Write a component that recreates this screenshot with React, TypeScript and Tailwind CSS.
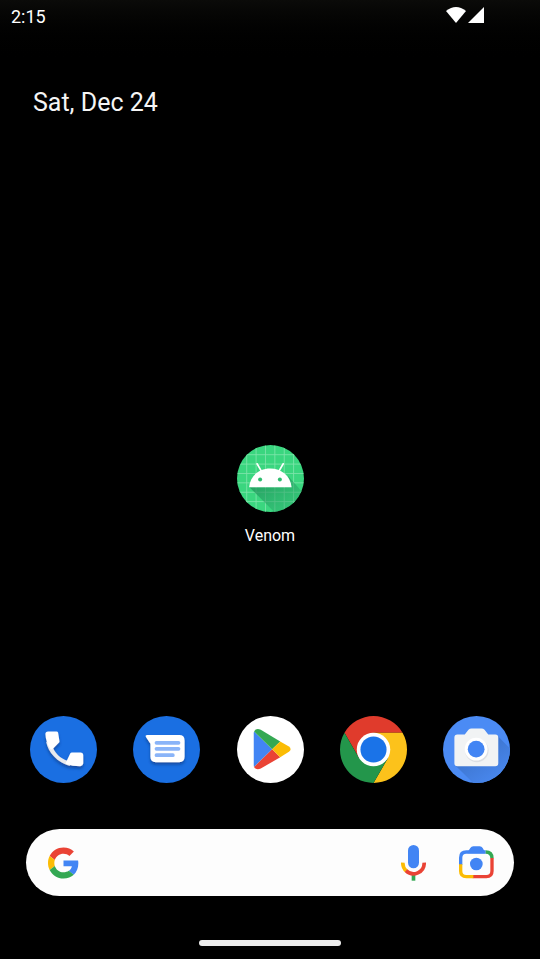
import type { ReactNode } from "react";

function VenomIcon() {
  return (
    <svg viewBox="0 0 200 200" className="size-[67px]" aria-hidden="true">
      <defs>
        <clipPath id="venom-disc">
          <circle cx="100" cy="100" r="100" />
        </clipPath>
        <linearGradient id="venom-shade" x1="0" y1="0" x2="1" y2="1">
          <stop offset="0" stopColor="#1d8a55" stopOpacity="0.85" />
          <stop offset="1" stopColor="#2bab6c" stopOpacity="0.25" />
        </linearGradient>
      </defs>
      <g clipPath="url(#venom-disc)">
        <rect width="200" height="200" fill="#3ad67f" />
        <path
          d="M29 0V200M57 0V200M85 0V200M113 0V200M141 0V200M169 0V200M0 29H200M0 57H200M0 85H200M0 113H200M0 141H200M0 169H200"
          stroke="#7fe5ab"
          strokeWidth="2.5"
        />
        <path d="M37 126L111 200H200V146L152 92L162 126Z" fill="url(#venom-shade)" />
      </g>
      <path d="M60 56L74 80M138 56L124 80" stroke="#fff" strokeWidth="5" strokeLinecap="round" />
      <path d="M36 126C39 92 66 70 99 70S160 92 163 126Z" fill="#fff" />
      <circle cx="69" cy="103" r="6" fill="#2fbd6f" />
      <circle cx="128" cy="103" r="6" fill="#2fbd6f" />
    </svg>
  );
}

function PhoneIcon() {
  return (
    <svg viewBox="0 0 200 200" className="size-[67px]" aria-hidden="true">
      <defs>
        <filter id="phone-shadow" x="-20%" y="-20%" width="150%" height="150%">
          <feDropShadow dx="0" dy="7" stdDeviation="5" floodColor="#0b3c86" floodOpacity="0.7" />
        </filter>
      </defs>
      <circle cx="100" cy="100" r="100" fill="#1a6fe2" />
      <g filter="url(#phone-shadow)">
        <path d="M48 76C54 108 82 140 120 149L114 134C90 128 72 108 66 88Z" fill="#e8eaed" />
        <path
          d="M54 46H79Q83 46 84 50L88 75Q88 78 86 80L67 99Q62 102 60 98Q47 76 46 54Q46 46 54 46Z"
          fill="#fff"
        />
        <path
          d="M125 109L151 109Q158 109 159 116V142Q158 149 150 150Q126 150 108 143Q104 141 108 137L120 112Q122 109 125 109Z"
          fill="#fff"
        />
      </g>
    </svg>
  );
}

function MessagesIcon() {
  return (
    <svg viewBox="0 0 200 200" className="size-[67px]" aria-hidden="true">
      <defs>
        <filter id="messages-shadow" x="-20%" y="-20%" width="150%" height="150%">
          <feDropShadow dx="0" dy="7" stdDeviation="5" floodColor="#0b3c86" floodOpacity="0.7" />
        </filter>
      </defs>
      <circle cx="100" cy="100" r="100" fill="#1a6fe2" />
      <path
        d="M42 57H138Q154 57 154 73V122Q154 138 138 138H68Q52 138 52 122V83L38 62Q36 57 42 57Z"
        fill="#fff"
        filter="url(#messages-shadow)"
      />
      <path d="M70 80H136M70 98H136M70 117H119" stroke="#8ab4f8" strokeWidth="11" strokeLinecap="round" />
    </svg>
  );
}

function PlayIcon() {
  return (
    <svg viewBox="0 0 200 200" className="size-[67px]" aria-hidden="true">
      <circle cx="100" cy="100" r="100" fill="#fff" />
      <path d="M51 46L105 99L51 152Q50 150 50 146V52Q50 48 51 46Z" fill="#4285f4" />
      <path d="M51 46Q57 35 71 41L129 76L105 99Z" fill="#34a853" />
      <path d="M51 152Q57 163 71 157L129 123L105 99Z" fill="#ea4335" />
      <path d="M129 76L155 91Q165 99 155 107L129 123L105 99Z" fill="#fbbc04" />
    </svg>
  );
}

function ChromeIcon() {
  return (
    <svg viewBox="0 0 200 200" className="size-[67px]" aria-hidden="true">
      <path d="M13.4 50A100 100 0 0 1 186.6 50H100L56.7 125Z" fill="#e03b2c" />
      <path d="M186.6 50A100 100 0 0 1 100 200L143.3 125L100 50Z" fill="#fcc21b" />
      <path d="M100 200A100 100 0 0 1 13.4 50L56.7 125H143.3Z" fill="#23964b" />
      <circle cx="100" cy="100" r="50" fill="#fff" />
      <circle cx="100" cy="100" r="39" fill="#1a73e8" />
    </svg>
  );
}

function CameraIcon() {
  return (
    <svg viewBox="0 0 200 200" className="size-[67px]" aria-hidden="true">
      <defs>
        <clipPath id="camera-disc">
          <circle cx="100" cy="100" r="100" />
        </clipPath>
        <linearGradient id="camera-shade" x1="0.3" y1="0.2" x2="0.9" y2="1">
          <stop offset="0" stopColor="#3b72ca" />
          <stop offset="1" stopColor="#4b8bf4" />
        </linearGradient>
      </defs>
      <g clipPath="url(#camera-disc)">
        <rect width="200" height="200" fill="#4b8bf4" />
        <path d="M37 148L90 200H200V97L162 58L150 130Z" fill="url(#camera-shade)" />
      </g>
      <path
        d="M43 55H65L76 41Q80 37 85 37H115Q120 37 124 41L135 55H156Q165 55 165 64V141Q165 150 156 150H43Q34 150 34 141V64Q34 55 43 55Z"
        fill="#f1f3f4"
      />
      <circle cx="101" cy="103" r="35" fill="#dcdfe3" />
      <circle cx="99" cy="99" r="34" fill="#fff" />
      <circle cx="99" cy="99" r="25" fill="#4285f4" />
    </svg>
  );
}

function GoogleLogo() {
  return (
    <svg viewBox="0 0 48 48" className="h-8 w-[31px]" aria-hidden="true">
      <path
        fill="#ea4335"
        d="M24 9.5c3.54 0 6.71 1.22 9.21 3.6l6.85-6.85C35.9 2.38 30.47 0 24 0 14.62 0 6.51 5.38 2.56 13.22l7.98 6.19C12.43 13.72 17.74 9.5 24 9.5z"
      />
      <path
        fill="#4285f4"
        d="M46.98 24.55c0-1.57-.15-3.09-.38-4.55H24v9.02h12.94c-.58 2.96-2.26 5.48-4.78 7.18l7.73 6c4.51-4.18 7.09-10.36 7.09-17.65z"
      />
      <path
        fill="#fbbc05"
        d="M10.53 28.59c-.48-1.45-.76-2.99-.76-4.59s.27-3.14.76-4.59l-7.98-6.19C.92 16.46 0 20.12 0 24c0 3.88.92 7.54 2.56 10.78l7.97-6.19z"
      />
      <path
        fill="#34a853"
        d="M24 48c6.48 0 11.93-2.13 15.89-5.81l-7.73-6c-2.15 1.45-4.92 2.3-8.16 2.3-6.26 0-11.57-4.22-13.47-9.91l-7.98 6.19C6.51 42.62 14.62 48 24 48z"
      />
    </svg>
  );
}

function MicIcon() {
  return (
    <svg viewBox="0 0 75 108" className="h-9 w-[25px]" aria-hidden="true">
      <rect x="21" y="0" width="33" height="70" rx="16.5" fill="#4285f4" />
      <path d="M37.5 84V107" stroke="#34a853" strokeWidth="11" />
      <path d="M5.5 53A32 32 0 0 0 16 78" fill="none" stroke="#fbbc04" strokeWidth="11" />
      <path d="M15 77A32 32 0 0 0 69.5 53" fill="none" stroke="#ea4335" strokeWidth="11" />
    </svg>
  );
}

function LensIcon() {
  return (
    <svg viewBox="0 0 105 99" className="h-[33px] w-[35px]" aria-hidden="true">
      <path d="M5 57V35Q5 18 22 18H80" fill="none" stroke="#4285f4" strokeWidth="10" />
      <path d="M26 18L34 6Q37 1 43 1H62Q68 1 71 6L80 22H26Z" fill="#4285f4" />
      <path d="M80 18Q99 18 99 37" fill="none" stroke="#34a853" strokeWidth="10" />
      <path d="M99 36V75Q99 92 82 92H41" fill="none" stroke="#ea4335" strokeWidth="10" />
      <path d="M5 55V75Q5 92 22 92H43" fill="none" stroke="#fbbc04" strokeWidth="10" />
      <circle cx="52" cy="54" r="19" fill="#4285f4" />
    </svg>
  );
}

const dockApps: { name: string; icon: ReactNode }[] = [
  { name: "Phone", icon: <PhoneIcon /> },
  { name: "Messages", icon: <MessagesIcon /> },
  { name: "Play Store", icon: <PlayIcon /> },
  { name: "Chrome", icon: <ChromeIcon /> },
  { name: "Camera", icon: <CameraIcon /> },
];

export default function App() {
  return (
    <div className="flex min-h-screen flex-col bg-linear-to-b from-[#0b0b09] to-black to-[68px] font-[Roboto,sans-serif] text-white">
      <header className="flex h-8 items-start justify-between pt-[7px] pr-14 pl-[11px]">
        <time className="text-lg leading-5">2:15</time>
        <div className="flex items-center gap-0.5">
          <svg viewBox="0 0 20 16" className="h-4 w-5" role="img" aria-label="Wi-Fi">
            <path d="M0 4Q10 -4 20 4L10 16Z" fill="#fff" />
          </svg>
          <svg viewBox="0 0 16 16" className="size-4" role="img" aria-label="Mobile signal">
            <path d="M16 0V16H0Z" fill="#fff" />
          </svg>
        </div>
      </header>

      <main className="flex flex-1 flex-col">
        <h1 className="px-[33px] pt-[55px] text-[25px] leading-8 text-[#f5f5f5]">Sat, Dec 24</h1>
        <div className="flex flex-1 flex-col items-center justify-end pb-[170px]">
          <button type="button" className="flex flex-col items-center gap-3.5">
            <VenomIcon />
            <span className="text-base leading-5">Venom</span>
          </button>
        </div>
      </main>

      <footer className="flex flex-col">
        <nav aria-label="Favorites" className="flex justify-between px-[30px]">
          {dockApps.map((app) => (
            <button key={app.name} type="button" aria-label={app.name}>
              {app.icon}
            </button>
          ))}
        </nav>
        <form
          role="search"
          className="mx-[26px] mt-[46px] flex h-[67px] items-center rounded-full bg-[#fdfdfd] pr-5 pl-[22px]"
        >
          <GoogleLogo />
          <input
            type="text"
            aria-label="Search"
            className="mx-4 min-w-0 flex-1 bg-transparent text-lg text-gray-900 outline-none"
          />
          <button type="button" aria-label="Voice search">
            <MicIcon />
          </button>
          <button type="button" aria-label="Search with camera" className="ml-[33px]">
            <LensIcon />
          </button>
        </form>
        <div className="mt-11 mb-[13px] h-[6px] w-[142px] self-center rounded-full bg-[#ececec]" />
      </footer>
    </div>
  );
}
